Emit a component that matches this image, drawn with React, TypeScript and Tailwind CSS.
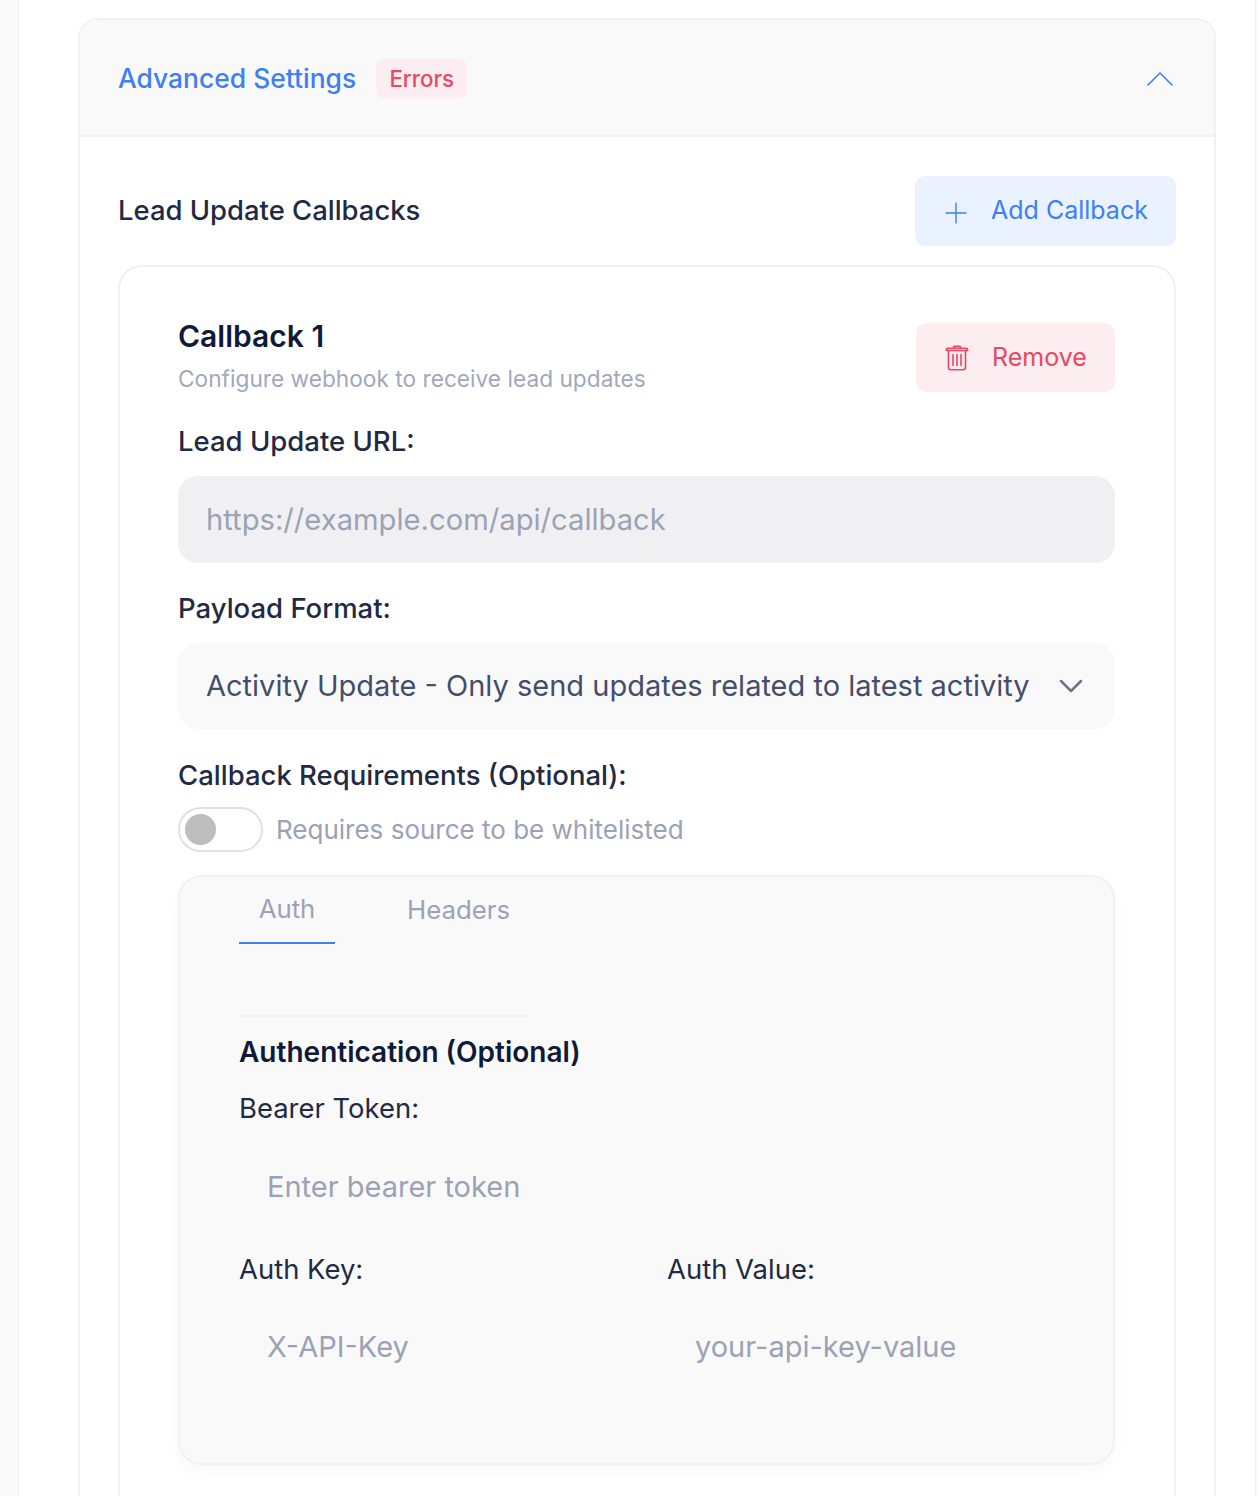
import React from "react";
import { ChevronUp, ChevronDown, Plus } from "lucide-react";

function Trash() {
  return (
    <svg width="24" height="26" viewBox="0 0 24 26" fill="none" stroke="#ea4763" strokeWidth="1.6" strokeLinecap="round" strokeLinejoin="round">
      <path d="M1.5 5.5h21" />
      <path d="M1.5 5.5v-1.2c0-.7.5-1 1-1h19c.5 0 1 .3 1 1v1.2" />
      <path d="M8.5 3.2V2.2c0-.6.4-1 1-1h5c.6 0 1 .4 1 1v1" />
      <path d="M3.5 5.5v16.8c0 1.4 1 2.4 2.4 2.4h12.2c1.4 0 2.4-1 2.4-2.4V5.5" />
      <path d="M8 9.5v11M12 9.5v11M16 9.5v11" />
    </svg>
  );
}

function Label({ children, className = "" }: { children: React.ReactNode; className?: string }) {
  return <div className={`text-[27.5px] leading-[36px] font-medium text-[#1f2a44] ${className}`}>{children}</div>;
}

export default function App() {
  return (
    <div className="h-[1496px] overflow-hidden bg-[#f9f9fa] pl-[18px] pr-[2px] font-['Inter',sans-serif]">
      <div className="h-full bg-white pl-[59px] pr-[39px] pt-[18px] border-x border-[#f2f2f5]">
        <div className="rounded-t-[20px] border-2 border-b-0 border-[#f1f1f4] bg-white h-[1500px]">
          <div className="flex h-[117px] items-center justify-between rounded-t-[18px] border-b-2 border-[#f1f1f4] bg-[#f9f9f9] pl-[38px] pr-[38px] pt-[2px]">
            <div className="flex items-center gap-[20px]">
              <span className="text-[26.45px] font-medium text-[#3e7ff5]">Advanced Settings</span>
              <span className="flex h-[39px] w-[91px] items-center justify-center rounded-[8px] bg-[#fcedf0] text-[22.3px] font-medium text-[#ea4763]">Errors</span>
            </div>
            <ChevronUp className="-mr-[8px] h-[48px] w-[48px] text-[#3e7ff5]" strokeWidth={0.8} />
          </div>

          <div className="pl-[38px] pr-[38px] pt-[39px]">
            <div className="flex items-start justify-between">
              <div className="pt-[15px] text-[27.45px] leading-[38px] font-medium text-[#1f2a44]">Lead Update Callbacks</div>
              <button className="flex h-[70px] w-[261px] items-center rounded-[10px] bg-[#e9f2fe] pl-[24px] text-[25px] font-normal text-[#3e7ff5]">
                <Plus className="mt-[3px] h-[34px] w-[34px]" strokeWidth={1} />
                <span className="ml-[18px]">Add Callback</span>
              </button>
            </div>

            <div className="mt-[19px] h-[1300px] rounded-t-[24px] border-2 border-b-0 border-[#f1f1f4] pl-[58px] pr-[59px] pt-[49px]">
              <div className="flex items-start justify-between">
                <div>
                  <div className="text-[30px] leading-[40px] font-semibold text-[#0f1a3a]">Callback 1</div>
                  <div className="mt-[7px] text-[22.7px] leading-[32px] text-[#a2a8ba]">Configure webhook to receive lead updates</div>
                </div>
                <button className="mt-[7px] flex h-[69px] w-[199px] items-center rounded-[10px] bg-[#fcedf0] pl-[29px] text-[25px] text-[#ea4763]">
                  <Trash />
                  <span className="ml-[23px]">Remove</span>
                </button>
              </div>

              <Label className="mt-[28px]">Lead Update URL:</Label>
              <div className="mt-[17px] flex h-[87px] items-center rounded-[20px] bg-[#f0f0f3] px-[28px] text-[29.2px] text-[#9ba2b6]">https://example.com/api/callback</div>

              <Label className="mt-[27px]">Payload Format:</Label>
              <div className="mt-[17px] flex h-[86px] items-center justify-between rounded-[20px] bg-[#f9f9fa] pl-[28px] pr-[24px] text-[29px] text-[#444d6b]">
                <span>Activity Update - Only send updates related to latest activity</span>
                <ChevronDown className="h-[40px] w-[40px] text-[#6c7290]" strokeWidth={1.5} />
              </div>

              <Label className="mt-[28px]">Callback Requirements (Optional):</Label>
              <div className="mt-[14px] flex items-center gap-[13px]">
                <div className="flex h-[45px] w-[85px] items-center rounded-full border-2 border-[#dfe2ec] bg-white pl-[5px]">
                  <div className="h-[31px] w-[31px] rounded-full bg-[#bdbdbd]" />
                </div>
                <span className="text-[26px] text-[#9ba2b6]">Requires source to be whitelisted</span>
              </div>

              <div className="mt-[23px] h-[590px] rounded-[24px] border-2 border-[#f1f1f4] bg-[#f9f9f9] px-[59px] shadow-[0_6px_16px_rgba(20,20,40,0.03)]">
                <div className="flex">
                  <div className="flex h-[67px] w-[96px] items-center justify-center border-b-2 border-[#3e7ff5] text-[25.8px] text-[#9ba2b6]">Auth</div>
                  <div className="flex h-[67px] items-center pl-[72px] text-[25.8px] text-[#9ba2b6]">Headers</div>
                </div>
                <div className="mt-[71px] h-[2px] w-[290px] bg-[#f1f1f4]" />
                <div className="mt-[16px] text-[28px] leading-[38px] font-semibold text-[#0f1a3a]">Authentication (Optional)</div>
                <div className="mt-[18px] text-[27.45px] leading-[38px] text-[#1f2a44]">Bearer Token:</div>
                <div className="mt-[40px] pl-[28px] text-[29px] leading-[40px] text-[#9ba2b6]">Enter bearer token</div>
                <div className="mt-[43px] grid grid-cols-2 gap-x-[41px]">
                  <div>
                    <div className="text-[27.45px] leading-[38px] text-[#1f2a44]">Auth Key:</div>
                    <div className="mt-[39px] pl-[28px] text-[29px] leading-[40px] text-[#9ba2b6]">X-API-Key</div>
                  </div>
                  <div>
                    <div className="text-[27.45px] leading-[38px] text-[#1f2a44]">Auth Value:</div>
                    <div className="mt-[39px] pl-[28px] text-[29px] leading-[40px] text-[#9ba2b6]">your-api-key-value</div>
                  </div>
                </div>
              </div>
            </div>
          </div>
        </div>
      </div>
    </div>
  );
}
